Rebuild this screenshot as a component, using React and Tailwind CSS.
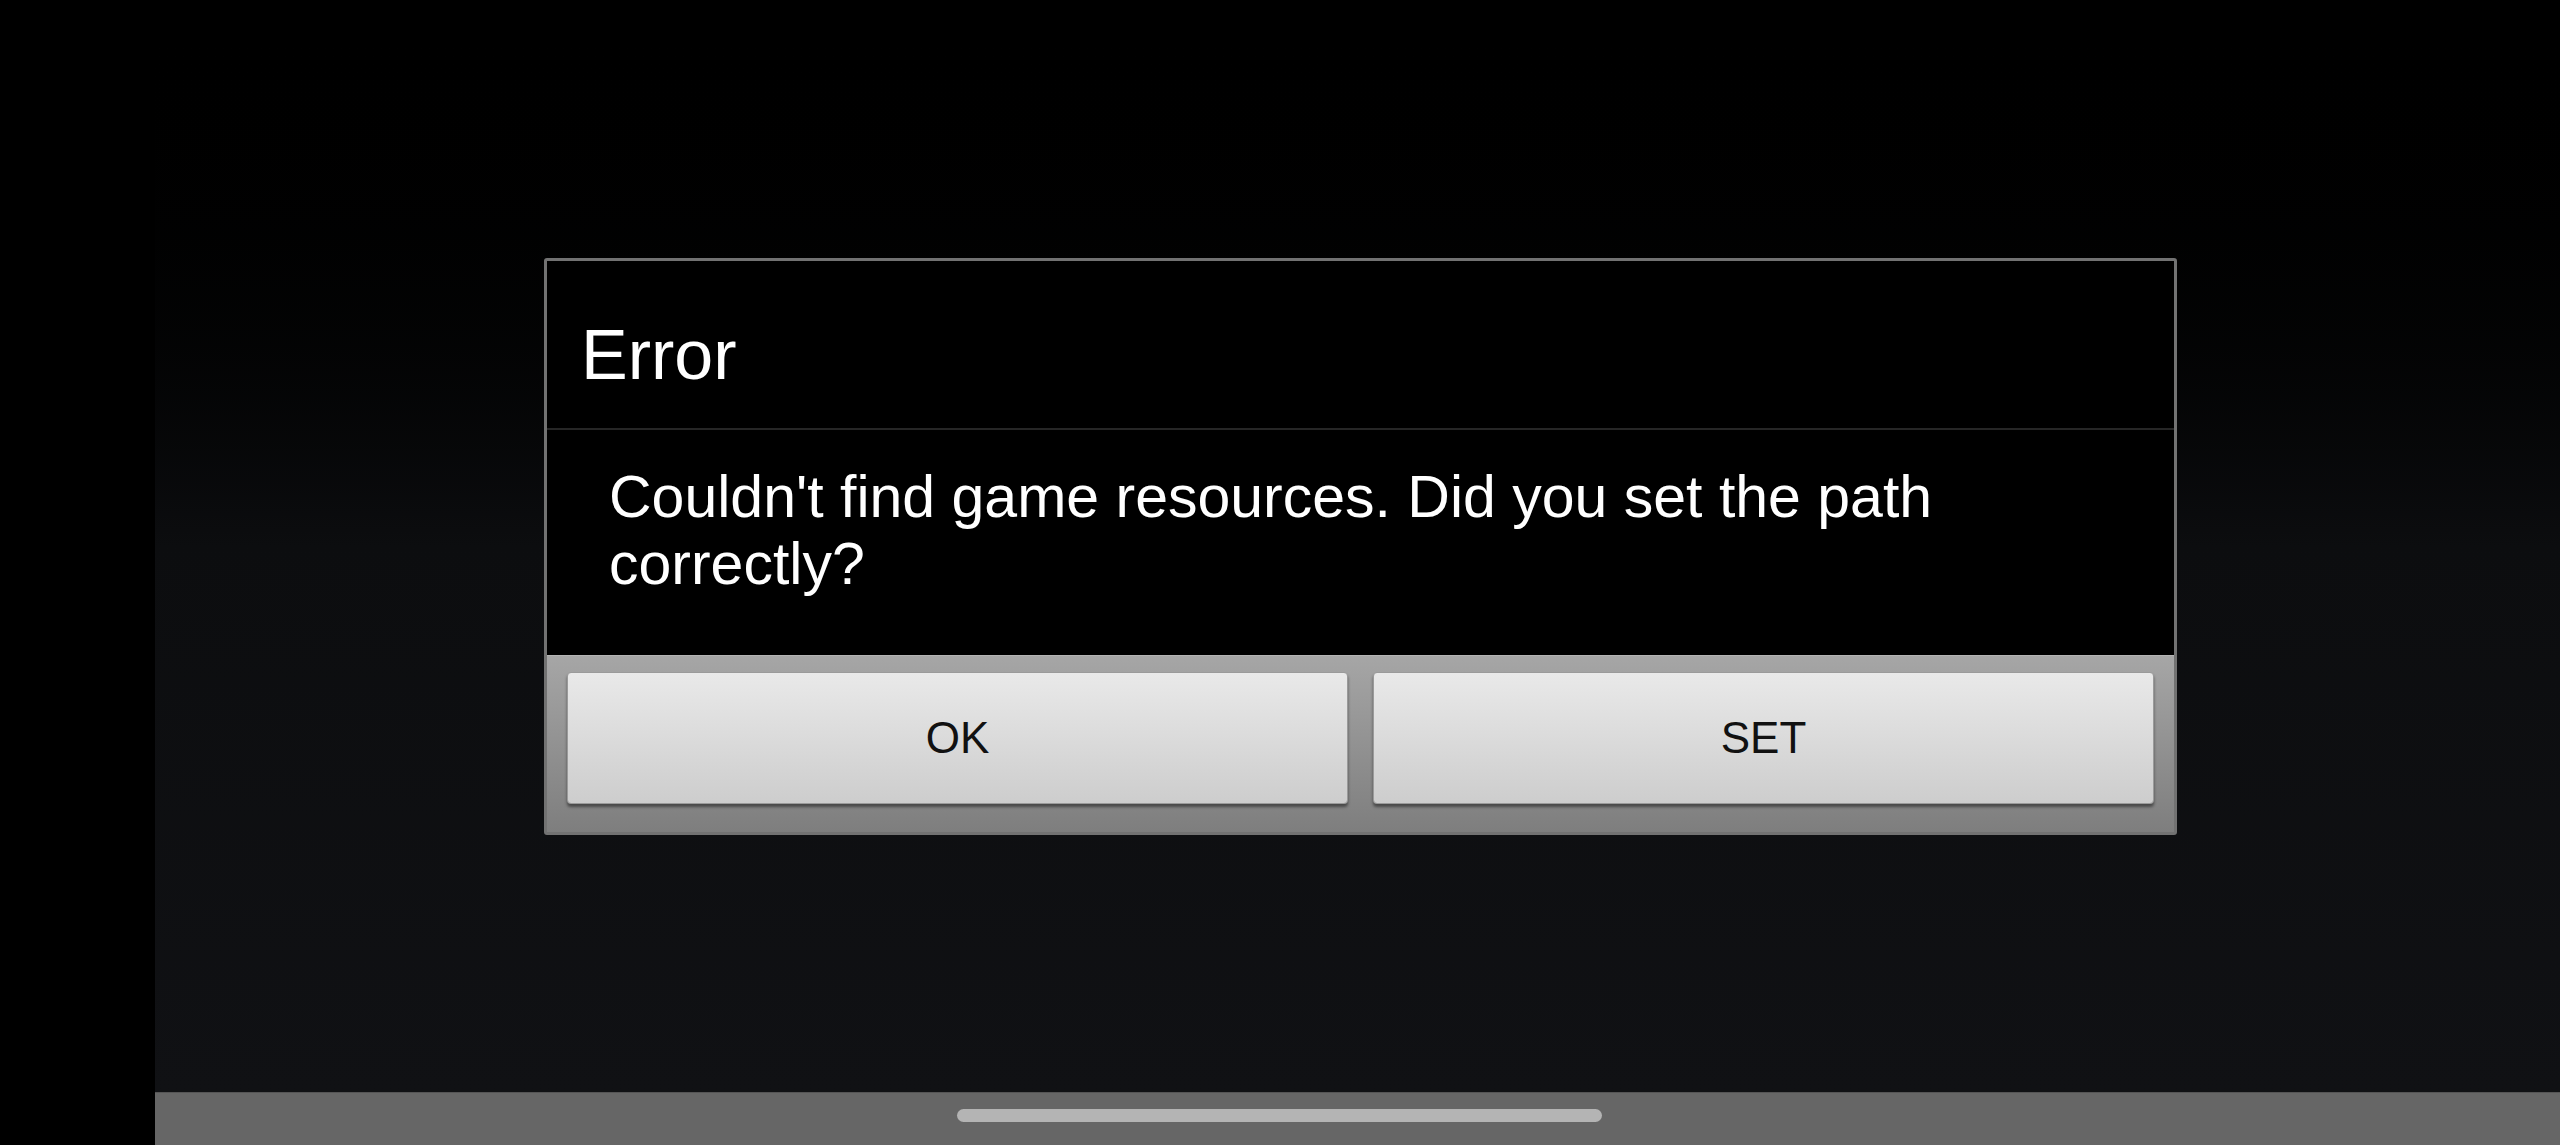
import React from 'react';

const font = { fontFamily: '"Liberation Sans", Arial, sans-serif' };

const DialogButton = ({ label }) => (
  <button
    type="button"
    className="flex-1 h-[132px] rounded-[4px] bg-gradient-to-b from-[#e9e9e9] to-[#cdcdcd] border border-[#9a9a9a] shadow-[0_3px_3px_rgba(0,0,0,0.45)] text-[44px] text-[#111] leading-none"
  >
    {label}
  </button>
);

const App = () => {
  return (
    <div className="flex w-[2560px] h-[1145px] bg-black" style={font}>
      {/* camera cut-out strip */}
      <div className="w-[155px] h-full bg-black" />

      <div className="flex flex-col flex-1 h-full">
        <div className="flex-1 bg-gradient-to-b from-black via-[#0c0d0f] to-[#101114] pt-[258px] pl-[389px]">
          <div className="w-[1633px] border-[3px] border-[#727272] rounded-[3px] bg-black flex flex-col">
            <div className="h-[167px] pt-[59px] pl-[34px] text-white text-[70px] leading-none">
              Error
            </div>
            <div className="h-[2px] bg-[#262626]" />
            <div className="h-[225px] pt-[34px] pl-[62px] pr-[60px] text-white text-[59px] leading-[67px]">
              Couldn't find game resources. Did you set the path
              <br />
              correctly?
            </div>
            <div className="h-[177px] flex gap-[25px] px-[20px] pt-[16px] bg-gradient-to-b from-[#a6a6a6] to-[#7e7e7e] border-t border-[#b4b4b4]">
              <DialogButton label="OK" />
              <DialogButton label="SET" />
            </div>
          </div>
        </div>

        {/* navigation bar with gesture handle */}
        <div className="h-[53px] bg-[#666666] border-t border-[#555] pt-[16px] pl-[802px]">
          <div className="w-[645px] h-[13px] rounded-full bg-[#b4b4b4]" />
        </div>
      </div>
    </div>
  );
};

export default App;
